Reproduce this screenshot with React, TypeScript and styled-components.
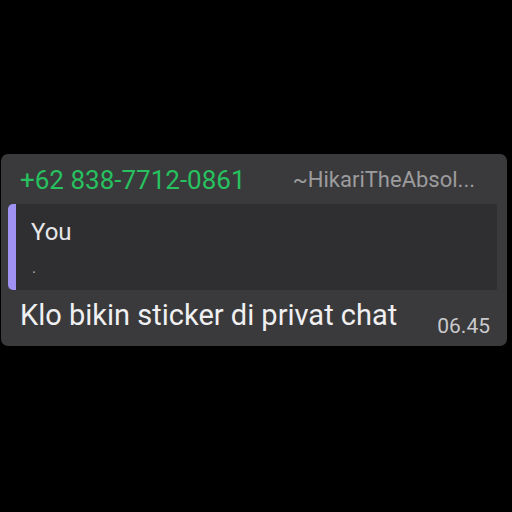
import React from "react";
import styled, { createGlobalStyle } from "styled-components";

const Global = createGlobalStyle`
  html, body { margin: 0; padding: 0; background: #000; }
  body { width: 512px; height: 512px; overflow: hidden; font-family: Roboto, "Noto Sans", sans-serif; }
`;

const Page = styled.div`
  padding-top: 154px;
  padding-left: 1px;
`;

const Bubble = styled.div`
  width: 506px;
  height: 192px;
  box-sizing: border-box;
  background: #3a3a3c;
  border-radius: 7px;
  display: flex;
  flex-direction: column;
`;

const Header = styled.div`
  height: 50px;
  flex: none;
  display: flex;
  align-items: flex-end;
  justify-content: space-between;
  padding: 0 32px 0 19px;
  box-sizing: border-box;
`;

const Phone = styled.span`
  color: #27c15f;
  font-size: 26px;
  line-height: 1;
  padding-bottom: 11px;
`;

const Name = styled.span`
  color: #9c9c9e;
  font-size: 22px;
  line-height: 1;
  padding-bottom: 13px;
`;

const Quote = styled.div`
  margin: 0 10px 0 7px;
  height: 86px;
  flex: none;
  background: #2f2f31;
  border-radius: 5px 2px 2px 5px;
  display: flex;
  overflow: hidden;
`;

const QuoteBar = styled.div`
  width: 8px;
  background: #9f92f2;
  flex: none;
`;

const QuoteBody = styled.div`
  padding: 16px 0 0 15px;
  display: flex;
  flex-direction: column;
`;

const QuoteAuthor = styled.span`
  color: #e6e6e8;
  font-size: 24px;
  line-height: 1;
`;

const QuoteText = styled.span`
  color: #aaaaac;
  font-size: 16px;
  line-height: 1;
  margin-top: 16px;
  padding-left: 1px;
`;

const Body = styled.div`
  flex: 1;
  display: flex;
  align-items: flex-start;
  justify-content: space-between;
  padding: 0 17px 0 19px;
`;

const Message = styled.span`
  color: #f0f0f2;
  font-size: 29px;
  line-height: 1;
  margin-top: 11px;
`;

const Time = styled.span`
  color: #c9c9cb;
  font-size: 21px;
  line-height: 1;
  margin-top: 26px;
`;

export default function App() {
  return (
    <>
      <Global />
      <Page>
        <Bubble>
          <Header>
            <Phone>+62 838-7712-0861</Phone>
            <Name>~HikariTheAbsol...</Name>
          </Header>
          <Quote>
            <QuoteBar />
            <QuoteBody>
              <QuoteAuthor>You</QuoteAuthor>
              <QuoteText>.</QuoteText>
            </QuoteBody>
          </Quote>
          <Body>
            <Message>Klo bikin sticker di privat chat</Message>
            <Time>06.45</Time>
          </Body>
        </Bubble>
      </Page>
    </>
  );
}
